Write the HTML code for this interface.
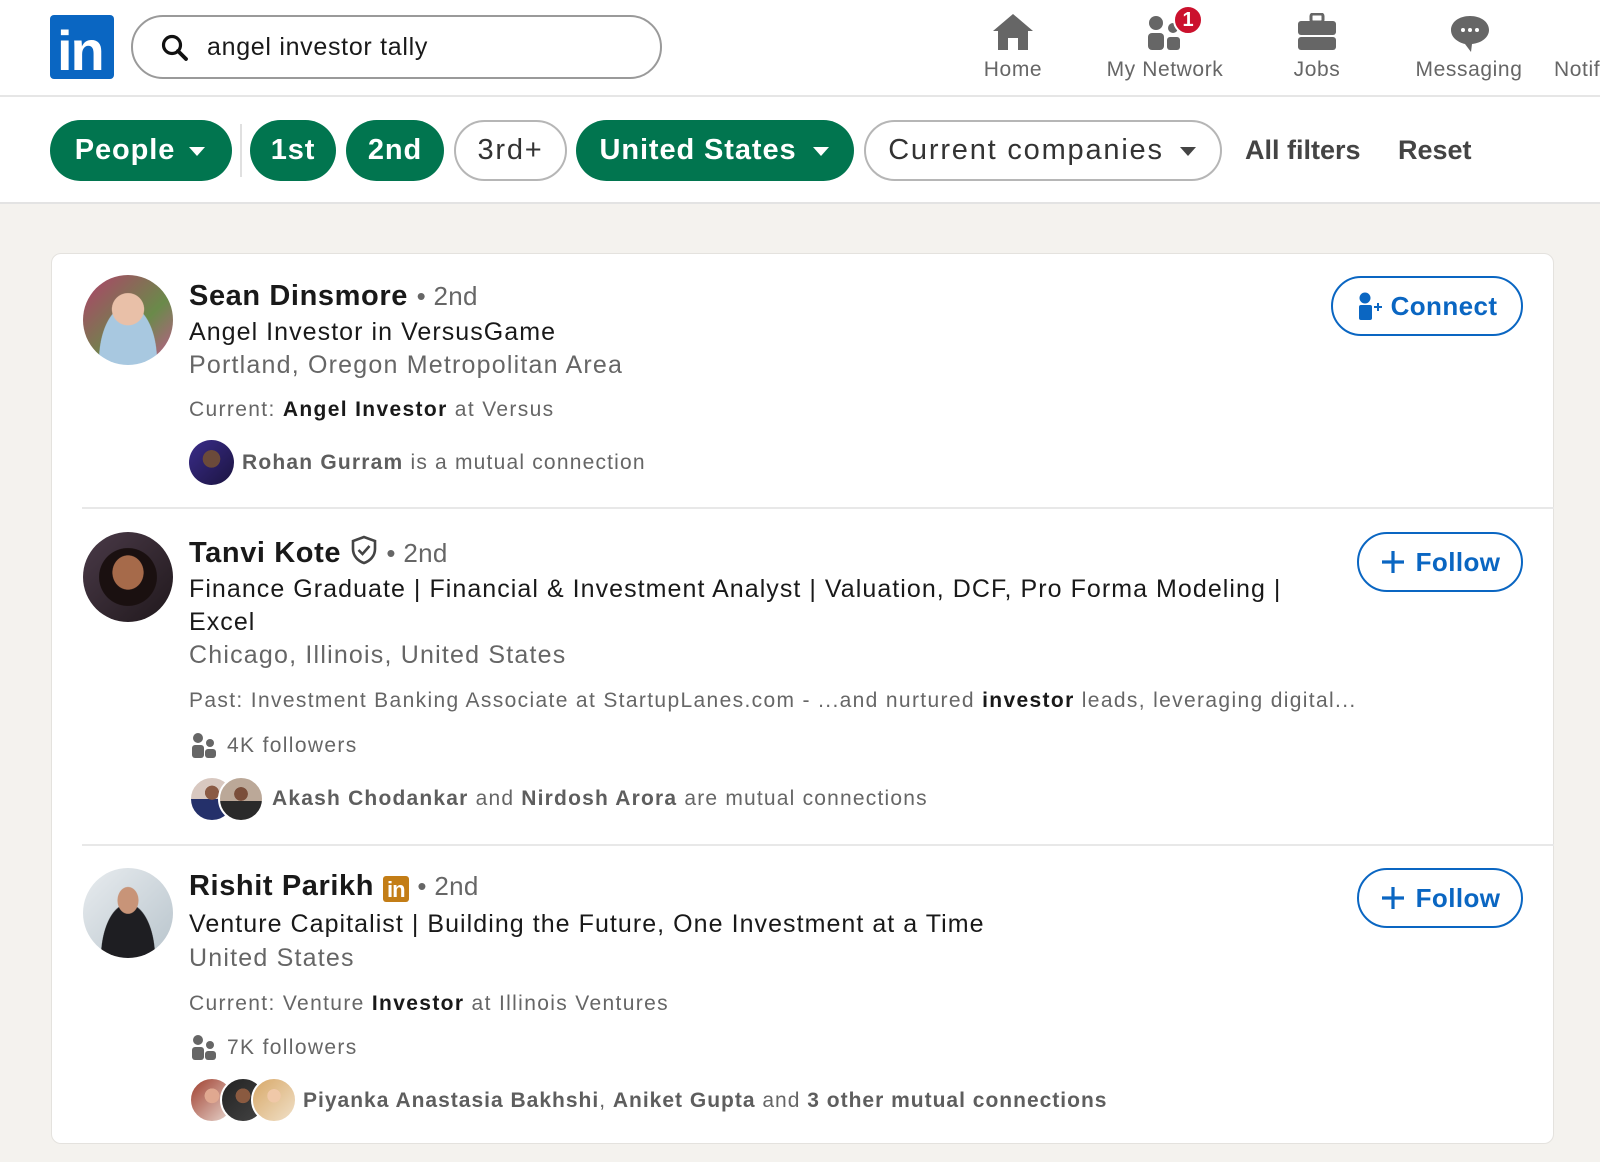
<!DOCTYPE html>
<html><head><meta charset="utf-8"><style>
*{margin:0;padding:0;box-sizing:border-box}
body{width:1600px;height:1162px;background:#f4f2ee;font-family:"Liberation Sans",Arial,sans-serif;position:relative;overflow:hidden;color:#000}
.a{position:absolute;white-space:nowrap}
.hdr{position:absolute;left:0;top:0;width:1600px;height:97px;background:#fff;border-bottom:2px solid #e6e6e6}
.fb{position:absolute;left:0;top:97px;width:1600px;height:107px;background:#fff;border-bottom:2px solid #e3e3e3}
.pill{position:absolute;top:120px;height:61px;border-radius:31px;font-size:29px;font-weight:bold;display:flex;align-items:center;justify-content:center;letter-spacing:0.9px}
.g{background:#01754f;color:#fff}
.w{background:#fff;color:#333;border:2px solid #b6b6b6;font-weight:normal;letter-spacing:1.8px}
.nav{position:absolute;top:58px;font-size:21px;color:#666;text-align:center;width:160px;letter-spacing:0.6px}
.card{position:absolute;left:51px;top:253px;width:1503px;height:891px;background:#fff;border-radius:10px;border:1px solid #e4e2de}
.sep{position:absolute;left:82px;width:1472px;height:2px;background:#e8e8e8}
.nm{font-size:29px;font-weight:bold;color:#191919;letter-spacing:0.6px}
.deg{font-size:26px;color:#666;font-weight:normal;letter-spacing:0.3px}
.t{font-size:25px;color:#191919;letter-spacing:1.05px}
.l{font-size:25px;color:#666;letter-spacing:1.2px}
.s{font-size:21px;color:#666;letter-spacing:1.35px}
.s b{color:#191919}
.m{font-size:21px;color:#666;letter-spacing:1.2px}
.m b{color:#5e5e5e}
.btn{position:absolute;height:60px;border:2px solid #0a66c2;border-radius:30px;color:#0a66c2;font-size:26px;font-weight:bold;display:flex;align-items:center;justify-content:center;background:#fff;letter-spacing:0.4px}
.av{position:absolute;border-radius:50%;overflow:hidden}
.sm{position:absolute;border-radius:50%;border:2px solid #fff}
</style></head><body>
<div class="hdr"></div>
<div class="a" style="left:50px;top:15px;width:64px;height:64px;background:#0a66c2;border-radius:4px"></div>
<div class="a" style="left:57px;top:19px;font-size:56px;font-weight:bold;color:#fff;letter-spacing:-2px;line-height:64px">in</div>
<div class="a" style="left:131px;top:15px;width:531px;height:64px;border:2px solid #9a9a9a;border-radius:32px;background:#fff"></div>
<svg class="a" style="left:160px;top:33px" width="30" height="30" viewBox="0 0 30 30"><circle cx="12" cy="12" r="8.5" fill="none" stroke="#111" stroke-width="3.2"/><path d="M18 18l8 8" stroke="#111" stroke-width="3.8" stroke-linecap="round"/></svg>
<div class="a" style="left:207px;top:33px;font-size:25px;color:#191919;letter-spacing:0.7px">angel investor tally</div>
<!-- nav -->
<svg class="a" style="left:992px;top:13px" width="42" height="38" viewBox="0 0 42 38"><path d="M21 1L1 18h5v19h10V25h10v12h10V18h5z" fill="#666"/></svg>
<div class="nav" style="left:933px">Home</div>
<svg class="a" style="left:1146px;top:12px" width="40" height="40" viewBox="0 0 40 40"><circle cx="10" cy="11" r="7" fill="#666"/><rect x="2" y="21" width="16" height="17" rx="4" fill="#666"/><circle cx="27" cy="16" r="5" fill="#666"/><rect x="21" y="25" width="13" height="13" rx="3" fill="#666"/></svg>
<div class="a" style="left:1173px;top:5px;width:30px;height:30px;border-radius:50%;background:#cb112d;border:2px solid #fff;color:#fff;font-size:20px;font-weight:bold;text-align:center;line-height:26px">1</div>
<div class="nav" style="left:1085px">My Network</div>
<svg class="a" style="left:1297px;top:13px" width="40" height="38" viewBox="0 0 40 38"><rect x="14" y="1" width="12" height="8" rx="2" fill="none" stroke="#666" stroke-width="3"/><rect x="1" y="8" width="38" height="14" rx="3" fill="#666"/><rect x="1" y="24" width="38" height="13" rx="3" fill="#666"/></svg>
<div class="nav" style="left:1237px">Jobs</div>
<svg class="a" style="left:1449px;top:15px" width="42" height="38" viewBox="0 0 42 38"><path d="M21 1C10 1 2 7 2 15c0 7 6 12 14 14l6 8 1-8C33 28 40 22 40 15 40 7 32 1 21 1z" fill="#666"/><circle cx="14" cy="15" r="2" fill="#fff"/><circle cx="21" cy="15" r="2" fill="#fff"/><circle cx="28" cy="15" r="2" fill="#fff"/></svg>
<div class="nav" style="left:1389px">Messaging</div>
<div class="a" style="left:1554px;top:58px;font-size:21px;color:#666;letter-spacing:0.6px">Notifications</div>
<!-- filters -->
<div class="fb"></div>
<div class="pill g" style="left:50px;width:182px">People<svg width="20" height="12" style="margin-left:12px" viewBox="0 0 20 12"><path d="M2 2h16l-8 9z" fill="#fff"/></svg></div>
<div class="a" style="left:240px;top:124px;width:2px;height:53px;background:#e0e0e0"></div>
<div class="pill g" style="left:250px;width:86px">1st</div>
<div class="pill g" style="left:346px;width:98px">2nd</div>
<div class="pill w" style="left:454px;width:113px">3rd+</div>
<div class="pill g" style="left:576px;width:278px">United States<svg width="20" height="12" style="margin-left:14px" viewBox="0 0 20 12"><path d="M2 2h16l-8 9z" fill="#fff"/></svg></div>
<div class="pill w" style="left:864px;width:358px;color:#333">Current companies<svg width="20" height="12" style="margin-left:14px" viewBox="0 0 20 12"><path d="M2 2h16l-8 9z" fill="#444"/></svg></div>
<div class="a" style="left:1245px;top:135px;font-size:27px;font-weight:bold;color:#444">All filters</div>
<div class="a" style="left:1398px;top:135px;font-size:27px;font-weight:bold;color:#444">Reset</div>
<!-- card -->
<div class="card"></div>
<div class="sep" style="top:507px"></div>
<div class="sep" style="top:844px"></div>
<!-- row1 -->
<div class="av" style="left:83px;top:275px;width:90px;height:90px;background:radial-gradient(circle at 50% 38%,#e9c0a8 0 22%,transparent 23%),radial-gradient(ellipse at 50% 95%,#a8c8e0 0 45%,transparent 46%),linear-gradient(135deg,#b0406a,#6a8a4a 60%,#c45890)"></div>
<div class="a nm" style="left:189px;top:280px">Sean Dinsmore <span class="deg">• 2nd</span></div>
<div class="a t" style="left:189px;top:318px">Angel Investor in VersusGame</div>
<div class="a l" style="left:189px;top:351px">Portland, Oregon Metropolitan Area</div>
<div class="a s" style="left:189px;top:398px">Current: <b>Angel Investor</b> at Versus</div>
<div class="av" style="left:189px;top:440px;width:45px;height:45px;background:radial-gradient(circle at 50% 42%,#6b4a3a 0 25%,transparent 26%),linear-gradient(135deg,#3a2c8a,#1b1440)"></div>
<div class="a m" style="left:242px;top:451px"><b>Rohan Gurram</b> is a mutual connection</div>
<div class="btn" style="left:1331px;top:276px;width:192px"><svg width="26" height="30" viewBox="0 0 26 30" style="margin-right:8px"><circle cx="8" cy="7" r="5.5" fill="#0a66c2"/><rect x="2" y="14" width="13" height="15" rx="2" fill="#0a66c2"/><path d="M17 16h8M21 12v8" stroke="#0a66c2" stroke-width="2"/></svg>Connect</div>
<!-- row2 -->
<div class="av" style="left:83px;top:532px;width:90px;height:90px;background:radial-gradient(ellipse at 50% 45%,#a66a4a 0 24%,transparent 25%),radial-gradient(ellipse at 50% 50%,#1a1010 0 45%,transparent 46%),linear-gradient(135deg,#4a3a48,#20181c)"></div>
<div class="a nm" style="left:189px;top:535px">Tanvi Kote <svg width="28" height="30" viewBox="0 0 28 30" style="vertical-align:-3px"><path d="M14 2L3 6v8c0 7 5 12 11 14 6-2 11-7 11-14V6z" fill="none" stroke="#444" stroke-width="2.6"/><path d="M8.5 15l4 4 7-8" fill="none" stroke="#444" stroke-width="2.6"/></svg> <span class="deg">• 2nd</span></div>
<div class="a t" style="left:189px;top:575px">Finance Graduate | Financial &amp; Investment Analyst | Valuation, DCF, Pro Forma Modeling |</div>
<div class="a t" style="left:189px;top:608px">Excel</div>
<div class="a l" style="left:189px;top:641px">Chicago, Illinois, United States</div>
<div class="a s" style="left:189px;top:689px">Past: Investment Banking Associate at StartupLanes.com - ...and nurtured <b>investor</b> leads, leveraging digital...</div>
<svg class="a" style="left:191px;top:732px" width="26" height="26" viewBox="0 0 26 26"><circle cx="7" cy="6" r="5" fill="#666"/><rect x="1" y="13" width="12" height="13" rx="3" fill="#666"/><circle cx="19" cy="11" r="4" fill="#666"/><rect x="14" y="17" width="11" height="9" rx="3" fill="#666"/></svg>
<div class="a s" style="left:227px;top:734px">4K followers</div>
<div class="sm" style="left:189px;top:776px;width:46px;height:46px;background:radial-gradient(circle at 50% 35%,#8a5a44 0 20%,transparent 21%),linear-gradient(180deg,#d8c8c0 0 50%,#24306a 50%)"></div>
<div class="sm" style="left:218px;top:776px;width:46px;height:46px;background:radial-gradient(circle at 50% 38%,#7a4e3a 0 20%,transparent 21%),linear-gradient(180deg,#bba898 0 55%,#2a2a2a 55%)"></div>
<div class="a m" style="left:272px;top:787px"><b>Akash Chodankar</b> and <b>Nirdosh Arora</b> are mutual connections</div>
<div class="btn" style="left:1357px;top:532px;width:166px"><svg width="26" height="26" viewBox="0 0 26 26" style="margin-right:10px"><path d="M13 2v22M2 13h22" stroke="#0a66c2" stroke-width="3.2"/></svg>Follow</div>
<!-- row3 -->
<div class="av" style="left:83px;top:868px;width:90px;height:90px;background:radial-gradient(ellipse at 50% 36%,#c89478 0 16%,transparent 17%),radial-gradient(ellipse at 50% 100%,#1e1e22 0 42%,transparent 43%),linear-gradient(135deg,#e8ecef,#b8c4cc)"></div>
<div class="a nm" style="left:189px;top:870px">Rishit Parikh <span style="display:inline-block;width:26px;height:26px;background:#c37d16;color:#fff;font-size:22px;line-height:27px;text-align:center;border-radius:3px;vertical-align:-2px;letter-spacing:-1px">in</span> <span class="deg">• 2nd</span></div>
<div class="a t" style="left:189px;top:910px">Venture Capitalist | Building the Future, One Investment at a Time</div>
<div class="a l" style="left:189px;top:944px">United States</div>
<div class="a s" style="left:189px;top:992px">Current: Venture <b>Investor</b> at Illinois Ventures</div>
<svg class="a" style="left:191px;top:1034px" width="26" height="26" viewBox="0 0 26 26"><circle cx="7" cy="6" r="5" fill="#666"/><rect x="1" y="13" width="12" height="13" rx="3" fill="#666"/><circle cx="19" cy="11" r="4" fill="#666"/><rect x="14" y="17" width="11" height="9" rx="3" fill="#666"/></svg>
<div class="a s" style="left:227px;top:1036px">7K followers</div>
<div class="sm" style="left:189px;top:1077px;width:46px;height:46px;background:radial-gradient(circle at 50% 40%,#e0a890 0 22%,transparent 23%),linear-gradient(135deg,#a04030,#e8d8d0)"></div>
<div class="sm" style="left:220px;top:1077px;width:46px;height:46px;background:radial-gradient(circle at 50% 40%,#8a5a40 0 22%,transparent 23%),linear-gradient(135deg,#222,#444)"></div>
<div class="sm" style="left:251px;top:1077px;width:46px;height:46px;background:radial-gradient(circle at 50% 40%,#f0c8a8 0 20%,transparent 21%),linear-gradient(135deg,#d8a868,#f0e0c8)"></div>
<div class="a m" style="left:303px;top:1089px;letter-spacing:1px"><b>Piyanka Anastasia Bakhshi</b>, <b>Aniket Gupta</b> and <b>3 other mutual connections</b></div>
<div class="btn" style="left:1357px;top:868px;width:166px"><svg width="26" height="26" viewBox="0 0 26 26" style="margin-right:10px"><path d="M13 2v22M2 13h22" stroke="#0a66c2" stroke-width="3.2"/></svg>Follow</div>
</body></html>
